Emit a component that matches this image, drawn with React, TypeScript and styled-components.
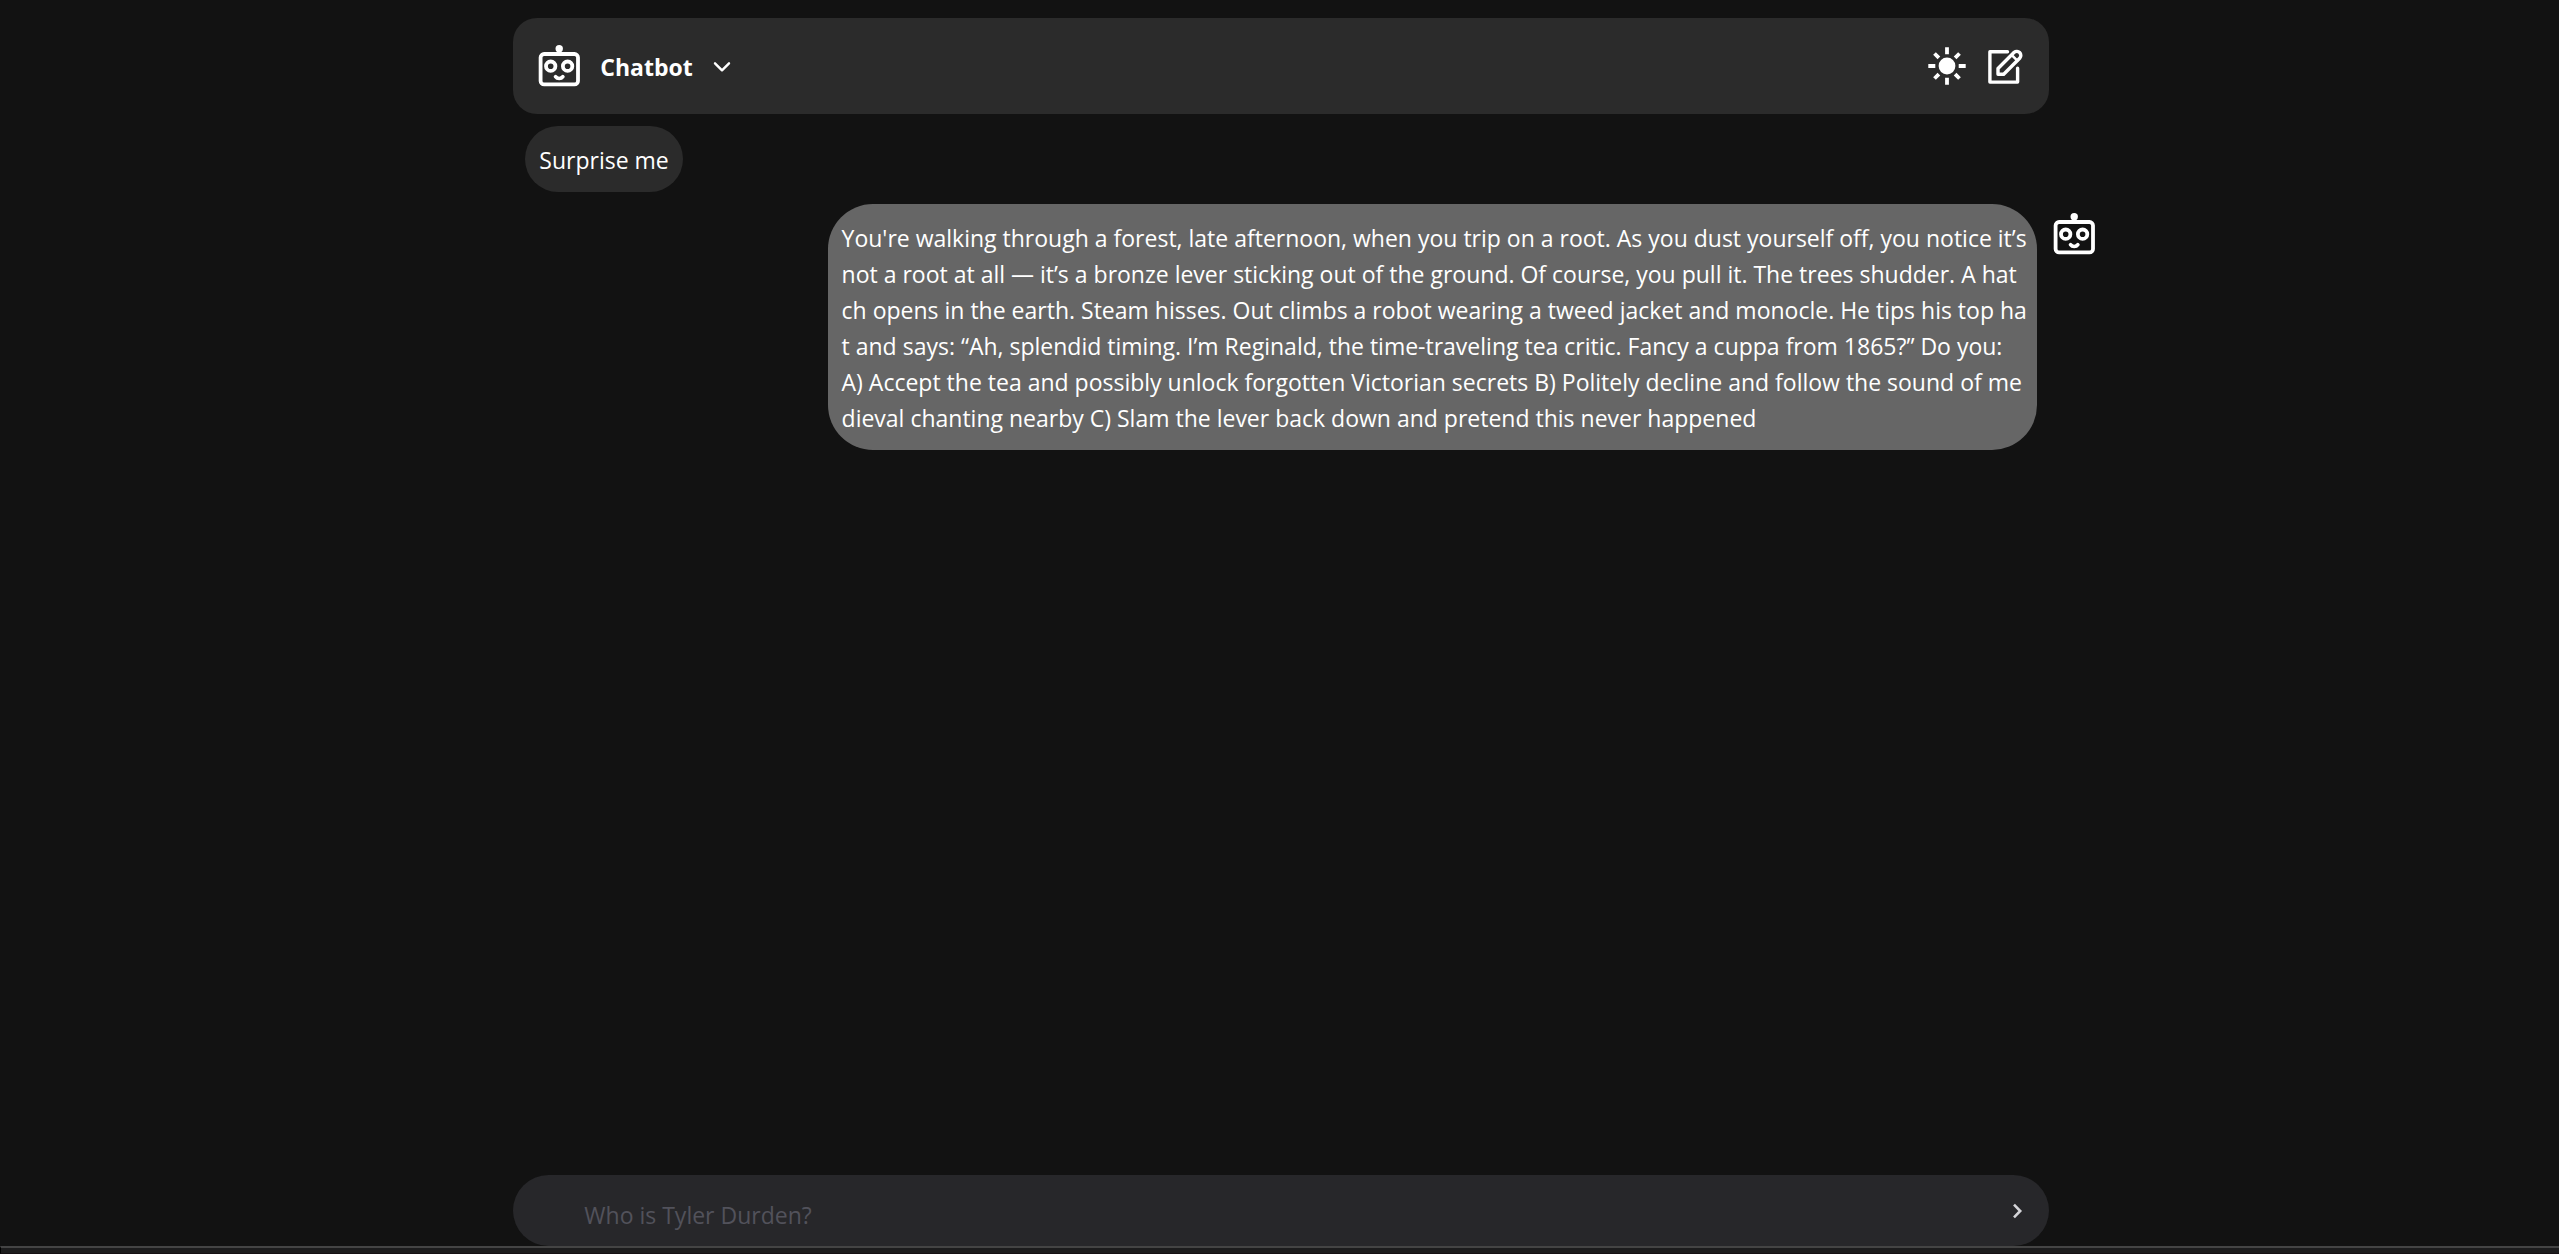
import React from "react";
import styled, { createGlobalStyle } from "styled-components";

const GlobalStyle = createGlobalStyle`
  *, *::before, *::after { box-sizing: border-box; }
  body {
    margin: 0;
    background: #121212;
    color: #fff;
    font-family: "Segoe UI", "Open Sans", "Noto Sans", sans-serif;
    font-size: 23px;
    line-height: 36px;
  }
`;

const Page = styled.div`
  display: flex;
  flex-direction: column;
  align-items: center;
  min-height: 100vh;
`;

const Column = styled.main`
  flex: 1;
  display: flex;
  flex-direction: column;
  width: 60%;
  margin-left: 3px;
  padding-top: 18px;
`;

const Header = styled.header`
  display: flex;
  align-items: center;
  justify-content: space-between;
  height: 96px;
  padding: 0 25px;
  border-radius: 24px;
  background: #2b2b2b;
`;

const HeaderGroup = styled.div<{ $gap: number }>`
  display: flex;
  align-items: center;
  gap: ${(p) => p.$gap}px;
`;

const Title = styled.h1`
  margin: 0;
  padding-top: 2px;
  font-size: 23px;
  line-height: 36px;
  font-weight: 700;
`;

const IconButton = styled.button`
  display: flex;
  padding: 0;
  border: 0;
  background: none;
  color: inherit;
  cursor: pointer;
`;

const TitleButton = styled(IconButton)`
  padding-top: 2px;
`;

const Messages = styled.section`
  flex: 1;
  display: flex;
  flex-direction: column;
  gap: 12px;
  padding: 12px;
`;

const MessageRow = styled.div<{ $fromBot?: boolean }>`
  display: flex;
  gap: 16px;
  padding-left: ${(p) => (p.$fromBot ? "20%" : "0")};
  margin-right: ${(p) => (p.$fromBot ? "-58px" : "0")};
`;

const Bubble = styled.div<{ $fromBot?: boolean }>`
  flex: ${(p) => (p.$fromBot ? "1" : "none")};
  min-width: 0;
  padding: 16px 14px 14px;
  border-radius: ${(p) => (p.$fromBot ? "45px" : "33px")};
  background: ${(p) => (p.$fromBot ? "#666" : "#2b2b2b")};
`;

const Line = styled.span`
  display: block;
  white-space: nowrap;
`;

const Avatar = styled.div`
  flex: none;
  height: 42px;
  margin-top: 9px;
`;

const Composer = styled.form`
  display: flex;
  align-items: center;
  height: 71px;
  padding: 0 24px 0 71px;
  border-radius: 36px;
  background: #27272a;
`;

const Prompt = styled.input`
  flex: 1;
  min-width: 0;
  height: 71px;
  padding: 8px 0 0;
  border: 0;
  outline: 0;
  background: none;
  color: #fff;
  font: inherit;
  &::placeholder { color: #52525b; opacity: 1; }
`;

const BottomEdge = styled.footer`
  width: 100%;
  height: 8px;
  border-top: 2px solid #444;
  border-bottom: 1px solid #151013;
  border-left: 1px solid #000;
  background: #1c1c1d;
`;

const Robot = () => (
  <svg width="42" height="42" viewBox="0 0 42 42" fill="none" stroke="currentColor" aria-hidden="true">
    <rect x="2.6" y="9" width="37.4" height="30.4" rx="3.5" strokeWidth="3.8" />
    <circle cx="21.2" cy="3.8" r="3.7" fill="currentColor" stroke="none" />
    <path d="M21.2 3v6" strokeWidth="3.4" />
    <circle cx="12.7" cy="21.2" r="4.7" strokeWidth="3.8" />
    <circle cx="29.6" cy="21.2" r="4.7" strokeWidth="3.8" />
    <path d="M17.5 31.6c1 1.4 2.3 1.9 3.7 1.9s2.7-.5 3.7-1.9" strokeWidth="3.6" strokeLinecap="round" />
  </svg>
);

const Sun = () => (
  <svg width="38" height="38" viewBox="-19 -19 38 38" stroke="currentColor" strokeWidth="3.8" aria-hidden="true">
    <circle r="8.4" fill="currentColor" stroke="none" />
    <path d="M0-18.7v7M0 11.7v7M-18.7 0h7M11.7 0h7M-12.5-12.5l4.4 4.4M12.5-12.5l-4.4 4.4M-12.5 12.5l4.4-4.4M12.5 12.5l-4.4-4.4" />
  </svg>
);

const Compose = () => (
  <svg width="36" height="36" viewBox="0 0 36 36" fill="none" stroke="currentColor" strokeWidth="3.4" strokeLinecap="round" strokeLinejoin="round" aria-hidden="true">
    <path d="M19.5 3.8H1.9v30.3h27.7V20.3" />
    <path d="M10 26.2v-5.7L26.2 4.3a4.05 4.05 0 0 1 5.7 5.7L15.7 26.2z" />
    <path d="M23.6 6.9l5.7 5.7" strokeWidth="2.6" />
  </svg>
);

const ChevronDown = () => (
  <svg width="18" height="18" viewBox="0 0 18 18" fill="none" stroke="currentColor" strokeWidth="2.4" strokeLinecap="round" strokeLinejoin="round" aria-hidden="true">
    <path d="M2 5.3l7 7 7-7" />
  </svg>
);

const ChevronRight = () => (
  <svg width="16" height="16" viewBox="0 0 16 16" fill="none" stroke="#d4d4d8" strokeWidth="2.6" aria-hidden="true">
    <path d="M5 1.7l6.2 6.3L5 14.3" />
  </svg>
);

const story = [
  "You're walking through a forest, late afternoon, when you trip on a root. As you dust yourself off, you notice it’s",
  "not a root at all — it’s a bronze lever sticking out of the ground. Of course, you pull it. The trees shudder. A hat",
  "ch opens in the earth. Steam hisses. Out climbs a robot wearing a tweed jacket and monocle. He tips his top ha",
  "t and says: “Ah, splendid timing. I’m Reginald, the time-traveling tea critic. Fancy a cuppa from 1865?” Do you:",
  "A) Accept the tea and possibly unlock forgotten Victorian secrets B) Politely decline and follow the sound of me",
  "dieval chanting nearby C) Slam the lever back down and pretend this never happened",
];

export default function App() {
  return (
    <Page>
      <GlobalStyle />
      <Column>
        <Header>
          <HeaderGroup $gap={20}>
            <Robot />
            <HeaderGroup $gap={20}>
              <Title>Chatbot</Title>
              <TitleButton type="button" aria-label="Choose chatbot">
                <ChevronDown />
              </TitleButton>
            </HeaderGroup>
          </HeaderGroup>
          <HeaderGroup $gap={22}>
            <IconButton type="button" aria-label="Light mode">
              <Sun />
            </IconButton>
            <IconButton type="button" aria-label="New chat">
              <Compose />
            </IconButton>
          </HeaderGroup>
        </Header>
        <Messages>
          <MessageRow>
            <Bubble>Surprise me</Bubble>
          </MessageRow>
          <MessageRow $fromBot>
            <Bubble $fromBot>
              {story.map((line) => (
                <Line key={line}>{line}</Line>
              ))}
            </Bubble>
            <Avatar>
              <Robot />
            </Avatar>
          </MessageRow>
        </Messages>
        <Composer onSubmit={(e) => e.preventDefault()}>
          <Prompt type="text" placeholder="Who is Tyler Durden?" aria-label="Message" />
          <IconButton type="submit" aria-label="Send">
            <ChevronRight />
          </IconButton>
        </Composer>
      </Column>
      <BottomEdge />
    </Page>
  );
}
